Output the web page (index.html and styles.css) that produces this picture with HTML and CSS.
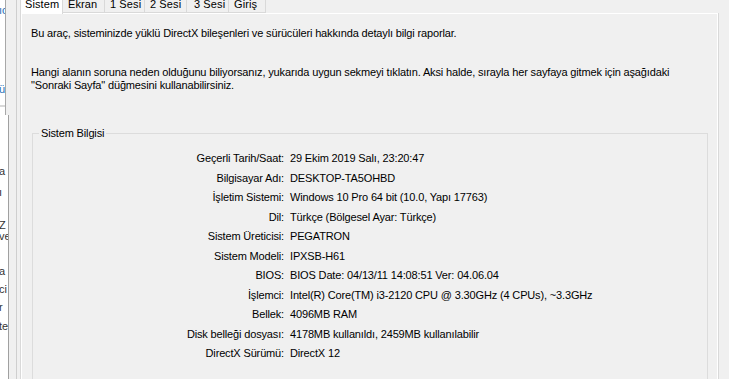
FILE: index.html
```html
<!DOCTYPE html>
<html lang="tr">
<head>
<meta charset="utf-8">
<title>DirectX Tanılama Aracı</title>
<link rel="stylesheet" href="styles.css">
</head>
<body>
<div class="screen">
  <div class="behind">
    <div class="behind-top">
      <div class="bl blue l1">ıc</div>
      <div class="bl blue l2">ü</div>
      <div class="hline"></div>
      <div class="bl grey l3">ze</div>
    </div>
    <div class="behind-bot">
      <div class="bl b1">a</div>
      <div class="bl b2">ı</div>
      <div class="bl b3">Z</div>
      <div class="bl b4">ve</div>
      <div class="bl b5">a</div>
      <div class="bl b6">ci</div>
      <div class="bl b7">r</div>
      <div class="bl b8">te</div>
    </div>
  </div>
  <div class="dialog">
    <div class="tabs">
      <div class="tab active t-sistem">Sistem</div>
      <div class="tab t-ekran">Ekran</div>
      <div class="tab t-s1">1 Sesi</div>
      <div class="tab t-s2">2 Sesi</div>
      <div class="tab t-s3">3 Sesi</div>
      <div class="tab t-giris">Giriş</div>
    </div>
    <div class="page">
      <div class="page-inner">
        <p class="intro">Bu araç, sisteminizde yüklü DirectX bileşenleri ve sürücüleri hakkında detaylı bilgi raporlar.</p>
        <p class="intro second">Hangi alanın soruna neden olduğunu biliyorsanız, yukarıda uygun sekmeyi tıklatın. Aksi halde, sırayla her sayfaya gitmek için aşağıdaki<br>"Sonraki Sayfa" düğmesini kullanabilirsiniz.</p>
        <div class="group">
          <div class="group-title">Sistem Bilgisi</div>
          <dl class="info">
            <dt>Geçerli Tarih/Saat:</dt><dd>29 Ekim 2019 Salı, 23:20:47</dd>
            <dt>Bilgisayar Adı:</dt><dd>DESKTOP-TA5OHBD</dd>
            <dt>İşletim Sistemi:</dt><dd>Windows 10 Pro 64 bit (10.0, Yapı 17763)</dd>
            <dt>Dil:</dt><dd>Türkçe (Bölgesel Ayar: Türkçe)</dd>
            <dt>Sistem Üreticisi:</dt><dd>PEGATRON</dd>
            <dt>Sistem Modeli:</dt><dd>IPXSB-H61</dd>
            <dt>BIOS:</dt><dd>BIOS Date: 04/13/11 14:08:51 Ver: 04.06.04</dd>
            <dt>İşlemci:</dt><dd>Intel(R) Core(TM) i3-2120 CPU @ 3.30GHz (4 CPUs), ~3.3GHz</dd>
            <dt>Bellek:</dt><dd>4096MB RAM</dd>
            <dt>Disk belleği dosyası:</dt><dd>4178MB kullanıldı, 2459MB kullanılabilir</dd>
            <dt>DirectX Sürümü:</dt><dd>DirectX 12</dd>
          </dl>
        </div>
      </div>
    </div>
  </div>
</div>
</body>
</html>
```

FILE: styles.css
```css
html, body {
  margin: 0;
  padding: 0;
}
body {
  background: #f0f0f0;
  font-family: "Liberation Sans", Arial, sans-serif;
  font-size: 11px;
  letter-spacing: -0.15px;
  color: #000;
}
.screen {
  display: flex;
  width: 729px;
  height: 379px;
  overflow: hidden;
}

/* window partly visible behind the dialog */
.behind {
  width: 16px;
  flex: none;
  display: flex;
  flex-direction: column;
  border-right: 1px solid #cfcfcf;
}
.behind-top {
  height: 115px;
  width: 5px;
  background: #fff;
  border-right: 1px solid #a8a8a8;
  overflow: hidden;
  display: flex;
  flex-direction: column;
}
.behind-bot {
  flex: 1;
  width: 8px;
  background: #fff;
  border-right: 1px solid #a0a0a0;
  overflow: hidden;
  display: flex;
  flex-direction: column;
}
.bl {
  height: 13px;
  line-height: 13px;
  white-space: nowrap;
  font-size: 11px;
  letter-spacing: 0;
  color: #333;
  text-indent: -1px;
}
.blue { color: #1f6fb8; }
.grey { color: #9a9a9a; }
.l1 { margin-top: 4px; }
.l2 { margin-top: 66px; }
.hline {
  margin-top: 9px;
  height: 2px;
  background: #d8d8d8;
  flex: none;
}
.l3 { margin-top: 18px; }
.b1 { margin-top: 50px; }
.b2 { margin-top: 8px; }
.b3 { margin-top: 20px; }
.b4 { margin-top: -2px; }
.b5 { margin-top: 22px; }
.b6 { margin-top: 5px; }
.b7 { margin-top: 5px; }
.b8 { margin-top: 6px; }

/* dialog */
.dialog {
  margin-left: 3px;
  width: 699px;
  flex: none;
  display: flex;
  flex-direction: column;
}
.tabs {
  display: flex;
  height: 13px;
  position: relative;
  z-index: 1;
}
.tab {
  height: 13px;
  line-height: 8px;
  padding: 0 0 0 5px;
  letter-spacing: 0.1px;
  background: #f0f0f0;
  border-right: 1px solid #d9d9d9;
  border-bottom: 1px solid #d9d9d9;
  box-sizing: border-box;
  flex: none;
}
.tab.active {
  background: #fff;
  border-left: 1px solid #d9d9d9;
  border-bottom: none;
  height: 14px;
  padding-left: 4px;
}
.t-sistem { width: 43px; }
.t-ekran { width: 42px; }
.t-s1 { width: 40px; }
.t-s2 { width: 42px; }
.t-s3 { width: 42px; padding-left: 7px; }
.t-giris { width: 37px; }

.page {
  flex: 1;
  border: 1px solid #d9d9d9;
  border-bottom: none;
  display: flex;
  flex-direction: column;
}
.page-inner {
  flex: 1;
  border: 1px solid #fff;
  border-bottom: none;
  background: #f0f0f0;
  padding: 13px 9px 0 9px;
  margin-top: -1px;
}

.intro {
  margin: 0;
  line-height: 13px;
  white-space: nowrap;
}
.intro.second {
  margin-top: 26px;
}
.group {
  margin: 41px 0 0 1px;
  width: 674px;
  border: 1px solid #dcdcdc;
  border-bottom: none;
  height: 260px;
}
.group-title {
  margin: -7px 0 0 6px;
  padding: 0 2px;
  width: fit-content;
  background: #f0f0f0;
  line-height: 13px;
}
.info {
  margin: 9px 0 0 0;
  display: grid;
  grid-template-columns: 251px 1fr;
  grid-auto-rows: 19.5px;
  column-gap: 6px;
  line-height: 19.5px;
}
.info dt {
  text-align: right;
  white-space: nowrap;
}
.info dd {
  margin: 0;
  white-space: nowrap;
}
```
